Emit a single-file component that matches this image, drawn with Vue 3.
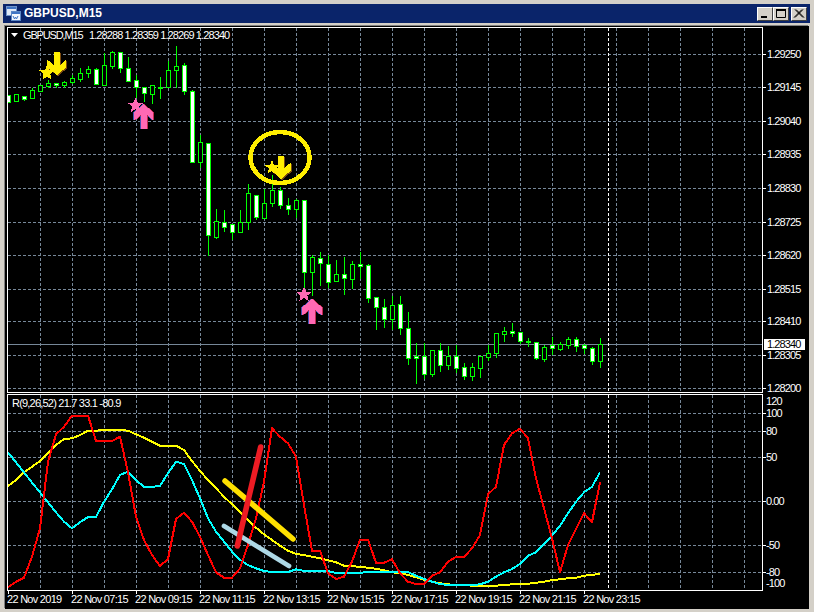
<script setup>
const G = 8
// x = 8 + 8i; [bodyTop, bodyBottom, high, low, filled]
const raw = [
[95,102,95,102,1],[94,101,94,101,0],[96,99,96,100,1],[90,98,88,98,0],[85,91,85,91,0],[83,86,80,87,0],[83,85,83,87,1],[82,85,81,87,0],
[78,82,75,83,0],[73,79,68,81,0],[69,73,66,77,0],[69,84,68,84,1],[65,85,53,85,0],[52,66,51,68,0],[52,68,52,72,1],[68,81,57,81,1],
[80,87,75,97,1],[87,93,87,101,1],[85,94,85,103,0],[87,88,77,98,1],[70,87,61,87,0],[66,70,46,87,0],[65,91,63,94,1],[91,162,90,162,1],
[142,162,135,167,0],[143,235,143,255,1],[221,237,209,238,0],[222,227,210,231,1],[224,232,224,239,1],[222,232,210,232,0],[193,222,184,229,0],[195,217,195,219,1],
[203,218,189,218,0],[190,203,175,206,0],[190,205,187,208,1],[205,209,198,214,1],[200,209,199,217,0],[200,272,200,287,1],[257,272,255,295,0],[258,263,252,285,1],
[264,282,255,287,1],[274,281,260,281,0],[274,278,257,294,1],[264,279,261,288,0],[264,266,252,278,1],[265,298,264,302,1],[297,307,297,329,1],[307,319,299,327,1],
[305,319,296,329,0],[304,328,296,334,1],[328,358,312,364,1],[356,358,343,383,1],[356,374,343,378,1],[350,374,350,376,0],[350,365,343,371,1],[356,365,346,369,0],
[356,368,345,372,1],[367,376,363,379,1],[367,376,363,380,0],[356,368,356,377,0],[353,357,345,360,0],[333,353,333,357,0],[331,334,327,341,0],[331,333,323,336,1],
[332,341,332,343,1],[341,342,338,346,1],[342,358,342,359,1],[347,359,345,361,0],[345,348,337,354,1],[344,349,342,350,0],[339,345,337,348,0],[339,346,337,351,1],
[345,348,344,353,1],[348,361,347,364,1],[344,361,338,367,0]
]
const candles = raw.map((c, i) => ({
  x: 8 + G * i, top: c[0], bottom: c[1], high: c[2], low: c[3], filled: !!c[4]
}))

const line = (zy) => zy.map((v, i) => `${8 + G * i},${(v / 3 + 385).toFixed(1)}`).join(' ')
const red = line([607,590,578,515,430,230,148,125,92,92,92,168,168,168,155,262,395,465,510,543,522,402,383,410,455,510,562,578,578,550,480,400,290,130,155,175,
215,360,497,497,565,582,575,530,464,464,533,533,523,565,590,597,597,572,562,530,516,516,490,450,328,305,180,145,131,160,280,370,460,562,480,432,385,411,292])
const cyan = line([202,232,262,293,322,352,382,410,430,412,396,396,350,313,270,260,285,306,306,302,265,230,237,285,340,400,440,470,500,525,540,550,558,561,561,561,
553,558,558,558,558,564,564,564,564,560,560,560,560,561,561,572,582,590,597,600,600,600,600,598,590,575,562,552,537,512,502,478,452,422,385,350,322,305,262])
const yellow = line([303,285,262,245,228,205,180,162,160,150,137,137,135,134,134,137,148,158,170,182,182,182,195,228,258,285,310,335,358,380,405,428,448,465,482,497,
507,510,515,520,526,532,542,543,546,548,551,556,562,564,570,577,584,590,595,598,600,600,602,602,603,602,600,598,597,596,593,590,585,583,580,578,572,570,566])

const vGrid = Array.from({ length: 23 }, (_, i) => 40 + 32 * i)
const priceLevels = [
  ['1.29250', 54], ['1.29145', 87], ['1.29040', 121], ['1.28935', 154], ['1.28830', 188], ['1.28725', 222],
  ['1.28620', 255], ['1.28515', 289], ['1.28410', 321], ['1.28305', 355], ['1.28200', 388]
]
const indLevels = [['100', 413], ['80', 431], ['50', 457], ['0.00', 501], ['-50', 545], ['-80', 572]]
const indExtra = [['120', 401], ['-100', 583]]
const times = ['22 Nov 2019', '22 Nov 07:15', '22 Nov 09:15', '22 Nov 11:15', '22 Nov 13:15', '22 Nov 15:15', '22 Nov 17:15', '22 Nov 19:15', '22 Nov 21:15', '22 Nov 23:15']
  .map((t, i) => ({ t, x: 8 + 64 * i }))

const star = (cx, cy, R) => {
  const r = R * 0.45
  const pts = []
  for (let i = 0; i < 10; i++) {
    const a = -Math.PI / 2 + (i * Math.PI) / 5
    const q = i % 2 ? r : R
    pts.push(`${(cx + q * Math.cos(a)).toFixed(1)},${(cy + q * Math.sin(a)).toFixed(1)}`)
  }
  return pts.join(' ')
}
const downArrow = (sl, sr, top, hy, l, r, tip, cx) =>
  `${sl},${top} ${sr},${top} ${sr},${hy} ${r},${hy - 5.5} ${r},${hy + 2.5} ${cx},${tip} ${l},${hy + 2.5} ${l},${hy - 5.5} ${sl},${hy}`
const upArrow = (sl, sr, bottom, hy, l, r, tip, cx) =>
  `${sl},${bottom} ${sr},${bottom} ${sr},${hy} ${r},${hy + 5.5} ${r},${hy - 2.5} ${cx},${tip} ${l},${hy - 2.5} ${l},${hy + 5.5} ${sl},${hy}`

const star1 = star(47, 73, 8)
const star2 = star(135.5, 105.5, 8)
const star3 = star(272, 167.5, 7.5)
const star4 = star(304, 294.5, 8)
const down1 = downArrow(54, 60, 52, 65, 47, 66, 75, 57)
const down2 = downArrow(278, 284, 156, 168, 271, 291, 179, 281)
const up1 = upArrow(141, 147, 129, 115, 134, 153, 104, 143.5)
const up2 = upArrow(309, 315, 324, 310, 302, 322, 299, 312)
</script>

<template>
  <div class="window">
    <header class="titlebar">
      <svg class="app-icon" width="15" height="15" viewBox="0 0 15 15">
        <rect x="0.5" y="0.5" width="10" height="9" fill="#dfe9f7" stroke="#6f93c9" />
        <rect x="1" y="1" width="9" height="2" fill="#3f74c4" />
        <rect x="5.5" y="5.5" width="9" height="9" fill="#f4f7fc" stroke="#5c86c4" />
        <rect x="6" y="6" width="8" height="2" fill="#3f74c4" />
        <path d="M7 10l1.5 3 1-2 1 2 1.5-3" fill="none" stroke="#3f74c4" />
      </svg>
      <span class="title-text">GBPUSD,M15</span>
      <div class="controls">
        <button class="ctl" type="button" aria-label="Minimize">
          <svg width="12" height="11" viewBox="0 0 12 11"><rect x="2" y="8" width="6" height="2" fill="#000" /></svg>
        </button>
        <button class="ctl" type="button" aria-label="Maximize">
          <svg width="12" height="11" viewBox="0 0 12 11"><path d="M1.5 1.5h9v8h-9z" fill="none" stroke="#000" /><rect x="1" y="1" width="10" height="2" fill="#000" /></svg>
        </button>
        <button class="ctl close" type="button" aria-label="Close">
          <svg width="12" height="11" viewBox="0 0 12 11"><path d="M2 1.5l8 8M3 1.5l8 8M10 1.5l-8 8M9 1.5l-8 8" stroke="#000" fill="none" /></svg>
        </button>
      </div>
    </header>

    <main class="chart">
      <svg class="plot" width="804" height="583" viewBox="5 26 804 583">
        <defs>
          <clipPath id="pane"><rect x="8" y="28" width="754" height="364" /></clipPath>
        </defs>

        <!-- grids -->
        <g class="grid">
          <line v-for="l in priceLevels" :key="l[0]" x1="8" x2="762" :y1="l[1] + 0.5" :y2="l[1] + 0.5" />
          <line v-for="l in indLevels" :key="l[0]" x1="8" x2="762" :y1="l[1] + 0.5" :y2="l[1] + 0.5" />
          <line v-for="x in vGrid" :key="'u' + x" :x1="x + 0.5" :x2="x + 0.5" y1="28" y2="392" />
          <line v-for="x in vGrid" :key="'d' + x" :x1="x + 0.5" :x2="x + 0.5" y1="395" y2="590" />
        </g>
        <line class="bid" x1="8" x2="762" y1="344.5" y2="344.5" />
        <line class="shift" x1="608.5" x2="608.5" y1="28" y2="392" />
        <line class="shift" x1="608.5" x2="608.5" y1="395" y2="590" />

        <!-- candles -->
        <g clip-path="url(#pane)">
          <g v-for="c in candles" :key="c.x">
            <line class="wick" :x1="c.x + 0.5" :x2="c.x + 0.5" :y1="c.high" :y2="c.low + 1" />
            <rect class="body" :class="{ filled: c.filled }" :x="c.x - 1.5" :y="c.top + 0.5" width="4" :height="c.bottom - c.top" />
          </g>
        </g>

        <!-- indicator lines -->
        <g class="ind">
          <polyline :points="yellow" stroke="#ffff00" />
          <polyline :points="cyan" stroke="#00ffff" />
          <polyline :points="red" stroke="#ff0000" />
        </g>

        <!-- drawn objects -->
        <g class="hand">
          <line x1="225" y1="481" x2="293" y2="539" stroke="#ffe100" stroke-width="5.5" />
          <line x1="224" y1="526" x2="289" y2="566" stroke="#add8e6" stroke-width="4.7" />
          <line x1="260.7" y1="447" x2="237.3" y2="546" stroke="#ed1c24" stroke-width="5.6" />
        </g>

        <ellipse class="ring" cx="280" cy="157.5" rx="29.5" ry="25.5" />

        <g class="objects">
          <g>
            <polygon :points="down1" fill="#7a4a10" transform="translate(1 1)" />
            <polygon :points="down1" fill="#ffee00" />
            <polygon :points="star1" fill="#ffee00" />
          </g>
          <g>
            <polygon :points="down2" fill="#7a4a10" transform="translate(1 1)" />
            <polygon :points="down2" fill="#ffee00" />
            <polygon :points="star3" fill="#ffee00" />
          </g>
          <g>
            <polygon :points="up1" fill="#4050b0" transform="translate(-1 0)" />
            <polygon :points="up1" fill="#c02a50" transform="translate(1 0)" />
            <polygon :points="up1" fill="#ff69b4" />
            <polygon :points="star2" fill="#ff69b4" />
          </g>
          <g>
            <polygon :points="up2" fill="#4050b0" transform="translate(-1 0)" />
            <polygon :points="up2" fill="#c02a50" transform="translate(1 0)" />
            <polygon :points="up2" fill="#ff69b4" />
            <polygon :points="star4" fill="#ff69b4" />
          </g>
        </g>

        <!-- frames -->
        <rect class="frame" x="7.5" y="27.5" width="755" height="365" />
        <rect class="frame" x="7.5" y="394.5" width="755" height="196" />

        <!-- chart captions -->
        <polygon points="11,33 18,33 14.5,37" fill="#fff" />
        <text class="lbl tight" x="23" y="39">GBPUSD,M15</text>
        <text class="lbl" x="89" y="39">1.28288 1.28359 1.28269 1.28340</text>
        <text class="lbl ind-cap" x="12" y="407">R(9,26,52) 21.7 33.1 -80.9</text>

        <!-- price axis -->
        <g v-for="l in priceLevels" :key="'p' + l[0]">
          <line class="tick" x1="763" x2="766" :y1="l[1] + 0.5" :y2="l[1] + 0.5" />
          <text class="lbl" x="767" :y="l[1] + 4">{{ l[0] }}</text>
        </g>
        <rect x="764" y="339" width="41" height="11" fill="#fff" />
        <text class="lbl tag" x="767" y="348">1.28340</text>

        <g v-for="l in indLevels" :key="'i' + l[0]">
          <line class="tick" x1="763" x2="766" :y1="l[1] + 0.5" :y2="l[1] + 0.5" />
          <text class="lbl" x="766" :y="l[1] + 4">{{ l[0] }}</text>
        </g>
        <text v-for="l in indExtra" :key="'e' + l[0]" class="lbl" x="766" :y="l[1] + 4">{{ l[0] }}</text>

        <!-- time axis -->
        <g v-for="t in times" :key="t.x">
          <line class="tick" :x1="t.x + 0.5" :x2="t.x + 0.5" y1="591" y2="594" />
          <text class="lbl time" :x="t.x - 1" y="603">{{ t.t }}</text>
        </g>
      </svg>
    </main>
  </div>
</template>

<style>
html, body { margin: 0; padding: 0; background: #d4d0c8; }
</style>

<style scoped>
.window {
  width: 814px;
  height: 612px;
  box-sizing: border-box;
  padding: 4px 4px 3px 3px;
  background: #d4d0c8;
  display: flex;
  flex-direction: column;
  overflow: hidden;
  font-family: "Liberation Sans", Arial, sans-serif;
}
.titlebar {
  height: 19px;
  flex: none;
  background: #0a246a;
  display: flex;
  align-items: center;
  padding: 0 3px;
  gap: 3px;
  margin-bottom: 3px;
}
.app-icon { flex: none; }
.title-text {
  color: #fff;
  font-size: 12px;
  font-weight: 700;
  line-height: 19px;
}
.controls {
  margin-left: auto;
  display: flex;
  align-items: center;
}
.ctl {
  width: 16px;
  height: 14px;
  padding: 0;
  margin: 0;
  box-sizing: border-box;
  background: #d4d0c8;
  border: 1px solid;
  border-color: #fff #404040 #404040 #fff;
  display: flex;
  align-items: center;
  justify-content: center;
}
.close { margin-left: 2px; }
.chart {
  flex: 1;
  min-height: 0;
  background: #000;
  margin-left: 2px;
  margin-right: 1px;
  box-shadow: -1px -1px 0 #808080;
}
.plot { display: block; }
.grid line {
  stroke: #778899;
  stroke-width: 1;
  stroke-dasharray: 3 2;
  shape-rendering: crispEdges;
}
.bid { stroke: #778899; stroke-width: 1; shape-rendering: crispEdges; }
.shift { stroke: #fff; stroke-width: 1; stroke-dasharray: 3 2; shape-rendering: crispEdges; }
.wick { stroke: #00ff00; stroke-width: 1; shape-rendering: crispEdges; }
.body { fill: #000; stroke: #00ff00; stroke-width: 1; shape-rendering: crispEdges; }
.body.filled { fill: #fff; }
.ind polyline { fill: none; stroke-width: 2; stroke-linejoin: round; shape-rendering: crispEdges; }
.hand line { stroke-linecap: round; }
.ring { fill: none; stroke: #ffee00; stroke-width: 4.5; shape-rendering: crispEdges; }
.objects polygon { shape-rendering: crispEdges; }
.frame { fill: none; stroke: #fff; stroke-width: 1; shape-rendering: crispEdges; }
.tick { stroke: #fff; stroke-width: 1; shape-rendering: crispEdges; }
.lbl {
  fill: #fff;
  font-family: "Liberation Sans", Arial, sans-serif;
  font-size: 11px;
  letter-spacing: -0.9px;
}
.tight { letter-spacing: -1.15px; }
.ind-cap { letter-spacing: -0.79px; }
.tag { fill: #000; }
.time { letter-spacing: -0.72px; }
</style>
